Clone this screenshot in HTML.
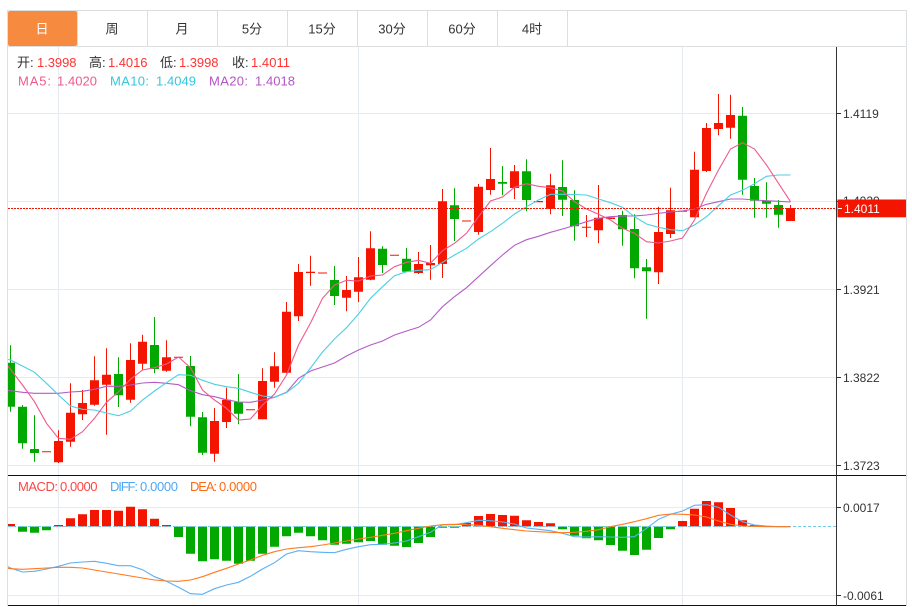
<!DOCTYPE html>
<html><head><meta charset="utf-8"><style>
html,body{margin:0;padding:0;background:#fff;width:912px;height:607px;overflow:hidden}
svg{display:block;font-family:"Liberation Sans","Noto Sans CJK SC",sans-serif}
text{white-space:pre}
</style></head><body>
<svg width="912" height="607" viewBox="0 0 912 607" xmlns="http://www.w3.org/2000/svg">
<defs><clipPath id="c"><rect x="8" y="47" width="828" height="558"/></clipPath></defs>
<rect width="912" height="607" fill="#fff"/>
<!-- grid -->
<path d="M8 113.5H836M8 201.5H836M8 289.5H836M8 377.5H836M8 465.5H836M8 507.5H836M8 595.5H836M58.5 47V605M358.5 47V605M682.5 47V605" stroke="#e5ebf1" fill="none"/>
<!-- frame -->
<path d="M7.5 10V606M906.5 10V606M7 10.5H907M8 46.5H906" stroke="#dcdfe2" fill="none"/>
<path d="M147.5 11V46M217.5 11V46M287.5 11V46M357.5 11V46M427.5 11V46M497.5 11V46M567.5 11V46M77.5 11V46" stroke="#dcdfe2" fill="none"/>
<rect x="8" y="11" width="69" height="35" rx="2" fill="#f68b3f"/>
<g font-size="13" fill="#333" text-anchor="middle">
<text x="42" y="33.500" fill="#fff">日</text>
<text x="112" y="33.500">周</text>
<text x="182" y="33.500">月</text>
<text x="252" y="33.500">5分</text>
<text x="322" y="33.500">15分</text>
<text x="392" y="33.500">30分</text>
<text x="462" y="33.500">60分</text>
<text x="532" y="33.500">4时</text>
</g>
<g font-size="13" fill="#333">
<text x="17" y="67">开:</text><text x="37" y="67" fill="#f33" textLength="39.500">1.3998</text>
<text x="89" y="67">高:</text><text x="108" y="67" fill="#f33" textLength="39.500">1.4016</text>
<text x="160" y="67">低:</text><text x="179" y="67" fill="#f33" textLength="39.500">1.3998</text>
<text x="232" y="67">收:</text><text x="251" y="67" fill="#f33" textLength="39">1.4011</text>
<text x="18" y="85.500" fill="#ee5a8c" textLength="33">MA5:</text><text x="57" y="85.500" fill="#ee5a8c" textLength="40">1.4020</text>
<text x="110" y="85.500" fill="#35c6dd" textLength="39">MA10:</text><text x="156" y="85.500" fill="#35c6dd" textLength="40">1.4049</text>
<text x="209" y="85.500" fill="#b455c6" textLength="39">MA20:</text><text x="255" y="85.500" fill="#b455c6" textLength="40">1.4018</text>
<text x="18" y="491" fill="#f44" textLength="40">MACD:</text><text x="60" y="491" fill="#f44" textLength="37.500">0.0000</text>
<text x="110" y="491" fill="#4fa8f5" textLength="28">DIFF:</text><text x="140" y="491" fill="#4fa8f5" textLength="38">0.0000</text>
<text x="190" y="491" fill="#ff6a14" textLength="27">DEA:</text><text x="219" y="491" fill="#ff6a14" textLength="38">0.0000</text>
</g>
<g clip-path="url(#c)">
<!-- red wicks -->
<path stroke="#f41500" fill="none" d="M58.500 430.300V463M70.500 383.300V446.700M82.500 390V420M94.500 356.300V405.700M106.500 348.300V434.700M130.500 343.300V402.700M142.500 334.700V369.700M166.500 340.300V371.700M214.500 408V461.700M226.500 387.700V428M262.500 368.300V419.300M274.500 352.300V387.700M286.500 302V373M298.500 264V321M310.500 255.700V285.700M346.500 276V311.300M358.500 257V302M370.500 231.300V280.300M418.500 252V274M430.500 245V279.700M442.500 189V278M478.500 184V234.700M490.500 148V194.700M514.500 165V199M550.500 173.700V214.300M586.500 215V237M598.500 185V243.300M658.500 206.700V284M670.500 187.700V238M694.500 151.700V217.300M706.500 123V172M718.500 94V135.300M730.500 94.700V138.700M790.500 205V221"/>
<!-- green wicks -->
<path stroke="#00a800" fill="none" d="M10.500 345.300V411.700M22.500 405V448.700M34.500 415.300V461.700M118.500 357.300V407M154.500 317V373.300M190.500 356V426.300M202.500 412V455M238.500 374V424.300M334.500 266V305M382.500 246.300V273M406.500 248V272M454.500 188.300V241M502.500 166V195.300M526.500 159.300V211.300M562.500 160.300V216M574.500 190.300V240.700M622.500 210.700V245.700M634.500 214.300V278.300M646.500 259V318.700M742.500 107V194.700M754.500 178V217.700M766.500 182.300V217.700M778.500 200V227.700"/>
<!-- red bodies -->
<path fill="#f41500" d="M42 451.200h9v1h-9zM54 441h9V462.300h-9zM66 412.700h9V441.700h-9zM78 403h9V414.300h-9zM90 380.300h9V404.700h-9zM102 374.700h9V384.700h-9zM126 360h9V399.700h-9zM138 341.700h9V363.700h-9zM162 357.300h9V370.700h-9zM174 356.800h9v1h-9zM210 421h9V453.700h-9zM222 399.700h9V422h-9zM246 409.200h9v1h-9zM258 381h9V419.300h-9zM270 366.300h9V381.700h-9zM282 311.700h9V372.700h-9zM294 272h9V316.300h-9zM306 271.800h9v1.200h-9zM318 272.500h9v1h-9zM342 290h9V297.700h-9zM354 277.300h9V291.700h-9zM366 248.300h9V279.700h-9zM390 254.800h9v1h-9zM414 264h9V273h-9zM426 263h9V265.300h-9zM438 201.300h9V264h-9zM462 220.500h9v1h-9zM474 186.700h9V232h-9zM486 179h9V190h-9zM510 171.300h9V188h-9zM534 201h9v1.200h-9zM546 185.300h9V208.700h-9zM582 226.800h9v1h-9zM594 217.700h9V230.300h-9zM606 217.500h9v1.500h-9zM654 232h9V272.300h-9zM666 210.300h9V234h-9zM678 210.800h9v1h-9zM690 169.700h9V217.300h-9zM702 128h9V171h-9zM714 123h9V129h-9zM726 115h9V127.700h-9zM786 208h9V221h-9z"/>
<!-- green bodies -->
<path fill="#00a800" d="M6 362.700h9V406.700H6zM18 406.700h9V443.300h-9zM30 449h9V453h-9zM114 374h9V395.300h-9zM150 345h9V369h-9zM186 366h9V416.700h-9zM198 417.300h9V452.700h-9zM234 402h9V413.700h-9zM330 280h9V296h-9zM378 248.700h9V265h-9zM402 258.700h9V271.700h-9zM450 205.300h9V219h-9zM498 182h9V183.700h-9zM522 171.300h9V200h-9zM558 187h9V199.700h-9zM570 200h9V226.300h-9zM618 215h9V229.300h-9zM630 229h9V268.300h-9zM642 267.300h9V271.300h-9zM738 115.700h9V179.700h-9zM750 186h9V200.700h-9zM762 200.700h9V203.700h-9zM774 205h9V214.700h-9z"/>
<!-- MA20 -->
<polyline fill="none" stroke="#b45cc8" stroke-width="1.100" points="8,390.500 10.500,390.700 22.500,392.300 34.500,393.300 46.500,393.300 58.500,393.300 70.500,392 82.500,391.300 94.500,389.300 106.500,386.300 118.500,386.300 130.500,385 142.500,383 154.500,382.300 166.500,383.300 178.500,384.700 190.500,390.700 202.500,394.700 214.500,396.700 226.500,399.700 238.500,402 250.500,402.300 262.500,400 274.500,397.300 286.500,392.300 298.500,378.300 310.500,371 322.500,367 334.500,363 346.500,356 358.500,350 370.500,345 382.500,341 394.500,335 406.500,331 418.500,327.300 430.500,320 442.500,306.700 454.500,296.700 466.500,287.700 478.500,276.700 490.500,265.700 502.500,255 514.500,245.300 526.500,239.700 538.500,236.300 550.500,232.300 562.500,229 574.500,225.500 586.500,221.700 598.500,218.300 610.500,216.700 622.500,216 634.500,216 646.500,215 658.500,213.300 670.500,212 682.500,211 694.500,209 706.500,204.300 718.500,201.700 730.500,199 742.500,199 754.500,200 766.500,200.700 778.500,201.300 790.500,202"/>
<!-- MA10 -->
<polyline fill="none" stroke="#4dcfe3" stroke-width="1.100" points="8,359.500 10.500,360 22.500,366 34.500,372.300 46.500,383.300 58.500,395 70.500,406 82.500,409.300 94.500,410 106.500,413 118.500,415.700 130.500,411 142.500,400 154.500,391 166.500,382.700 178.500,374.700 190.500,375.300 202.500,380.300 214.500,384.300 226.500,386.700 238.500,388.300 250.500,392.300 262.500,396 274.500,397.300 286.500,392.700 298.500,383.300 310.500,368 322.500,352 334.500,339 346.500,327.700 358.500,314 370.500,298.300 382.500,286.700 394.500,275.700 406.500,271.700 418.500,270.300 430.500,269.700 442.500,262.300 454.500,255 466.500,248.300 478.500,239 490.500,231.700 502.500,223.300 514.500,214 526.500,206.700 538.500,200 550.500,194.300 562.500,194.300 574.500,194.500 586.500,195 598.500,199 610.500,202.700 622.500,207.300 634.500,216.700 646.500,224 658.500,227.300 670.500,229.700 682.500,230.700 694.500,225 706.500,216.700 718.500,205.700 730.500,195 742.500,190.300 754.500,183.700 766.500,176.300 778.500,175 790.500,175"/>
<!-- MA5 -->
<polyline fill="none" stroke="#ee5a8c" stroke-width="1.100" points="8,366 10.500,369.300 22.500,385 34.500,401.700 46.500,423.300 58.500,438.300 70.500,439.300 82.500,431.700 94.500,418.300 106.500,402.300 118.500,391.700 130.500,379.300 142.500,370 154.500,367.700 166.500,364 178.500,357 190.500,367.700 202.500,390 214.500,400 226.500,408.300 238.500,420 250.500,419 262.500,405 274.500,394 286.500,375 298.500,345 310.500,323 322.500,298.300 334.500,285 346.500,280.300 358.500,281 370.500,276 382.500,275 394.500,266.700 406.500,262.300 418.500,260.300 430.500,263.300 442.500,250.700 454.500,243.300 466.500,233.300 478.500,216.700 490.500,201 502.500,197 514.500,187.300 526.500,183.700 538.500,186.300 550.500,187.700 562.500,191 574.500,201.700 586.500,209 598.500,214.300 610.500,220 622.500,228.300 634.500,233.300 646.500,241.700 658.500,243 670.500,241 682.500,238 694.500,220 706.500,193.300 718.500,170 730.500,149 742.500,142.700 754.500,149 766.500,165 778.500,183.300 790.500,201.700"/>
<!-- current price line -->
<path d="M8 208.500H836" stroke="#f41500" stroke-dasharray="2 1" fill="none"/>
<!-- MACD histogram -->
<path fill="#f41500" d="M6 524h9v2.500H6zM54 525h9v1.500h-9zM66 518.300h9v8.200h-9zM78 514.300h9v12.200h-9zM90 510h9v16.500h-9zM102 510h9v16.500h-9zM114 510.700h9v15.800h-9zM126 506.700h9v19.800h-9zM138 509.300h9v17.200h-9zM150 518.700h9v7.800h-9zM162 525h9v1.500h-9zM462 523h9v3.500h-9zM474 516h9v10.500h-9zM486 514h9v12.500h-9zM498 515h9v11.500h-9zM510 515.700h9v10.800h-9zM522 520.300h9v6.200h-9zM534 522h9v4.500h-9zM546 523.300h9v3.200h-9zM678 521h9v5.500h-9zM690 508.700h9v17.800h-9zM702 501h9v25.500h-9zM714 502.300h9v24.200h-9zM726 508h9v18.500h-9zM738 520.300h9v6.200h-9zM750 525h9v1.500h-9z"/>
<path fill="#00a800" d="M18 526.500h9V531.700h-9zM30 526.500h9V532.700h-9zM42 526.500h9V530.300h-9zM174 526.500h9V537h-9zM186 526.500h9V553.700h-9zM198 526.500h9V561.300h-9zM210 526.500h9V559.300h-9zM222 526.500h9V560.700h-9zM234 526.500h9V563.700h-9zM246 526.500h9V560.700h-9zM258 526.500h9V553.700h-9zM270 526.500h9V546.700h-9zM282 526.500h9V536.300h-9zM294 526.500h9V532.700h-9zM306 526.500h9V536.300h-9zM318 526.500h9V540.300h-9zM330 526.500h9V544.700h-9zM342 526.500h9V543.700h-9zM354 526.500h9V542.300h-9zM366 526.500h9V541h-9zM378 526.500h9V544.700h-9zM390 526.500h9V545.700h-9zM402 526.500h9V547h-9zM414 526.500h9V543h-9zM426 526.500h9V537h-9zM438 526.500h9V527.700h-9zM450 526.500h9V527.700h-9zM558 526.500h9V529.300h-9zM570 526.500h9V535.700h-9zM582 526.500h9V538.300h-9zM594 526.500h9V540.300h-9zM606 526.500h9V545h-9zM618 526.500h9V550.700h-9zM630 526.500h9V555h-9zM642 526.500h9V549.700h-9zM654 526.500h9V538h-9zM666 526.500h9V529.300h-9z"/>
<path d="M8 526.500H836" stroke="#6fcdec" stroke-dasharray="3 2" fill="none"/>
<!-- DIFF -->
<polyline fill="none" stroke="#5cb0f5" stroke-width="1.100" points="8,566.700 10.500,568 22.500,572 34.500,571.300 46.500,569 58.500,566.300 70.500,563 82.500,562 94.500,561.300 106.500,563.300 118.500,565.700 130.500,565.700 142.500,569.700 154.500,576.700 166.500,581.300 178.500,587.300 190.500,593.700 202.500,594.300 214.500,588.700 226.500,585 238.500,582.300 250.500,576.300 262.500,569 274.500,562.700 286.500,554 298.500,550.700 310.500,551.700 322.500,552.300 334.500,552.700 346.500,549.300 358.500,546.700 370.500,544.700 382.500,544.300 394.500,543 406.500,541 418.500,536.700 430.500,532.300 442.500,524.700 454.500,524.700 466.500,522.700 478.500,520.300 490.500,520.700 502.500,522 514.500,524 526.500,528 538.500,529.300 550.500,530.700 562.500,533.300 574.500,536.700 586.500,537 598.500,536.700 610.500,537 622.500,537.300 634.500,536.700 646.500,528.300 658.500,519.300 670.500,514.300 682.500,511 694.500,505.300 706.500,504.700 718.500,507.300 730.500,515 742.500,521.700 754.500,525 766.500,526 778.500,526.700 790.500,526.700"/>
<!-- DEA -->
<polyline fill="none" stroke="#ff7a1f" stroke-width="1.100" points="8,568.300 10.500,568.700 22.500,569.300 34.500,568.700 46.500,568 58.500,567.300 70.500,567.300 82.500,568 94.500,570 106.500,572 118.500,574 130.500,576 142.500,578 154.500,580 166.500,581 178.500,581.300 190.500,580 202.500,576.700 214.500,572.300 226.500,568.300 238.500,564 250.500,560 262.500,555.300 274.500,551.700 286.500,549 298.500,547.700 310.500,546.700 322.500,545 334.500,543 346.500,541 358.500,539 370.500,537.300 382.500,535.300 394.500,533.300 406.500,530.700 418.500,528.300 430.500,526 442.500,524.700 454.500,524.300 466.500,524.700 478.500,525.300 490.500,526.700 502.500,528.300 514.500,529.700 526.500,531 538.500,531.700 550.500,532.300 562.500,532.700 574.500,532.300 586.500,531.300 598.500,529.700 610.500,526.700 622.500,524.300 634.500,521.700 646.500,518.700 658.500,515.300 670.500,514 682.500,514.300 694.500,515 706.500,517 718.500,521 730.500,524.300 742.500,526 754.500,526.300 766.500,526.700 790.500,526.700"/>
</g>
<!-- axis -->
<path d="M8 475.500H906M8 605.500H906" stroke="#111" fill="none"/>
<path d="M836.500 47V606" stroke="#333" fill="none"/>
<path d="M837 113.500h4M837 201.500h4M837 289.500h4M837 377.500h4M837 465.500h4M837 507.500h4M837 595.500h4" stroke="#333" fill="none"/>
<g font-size="12" fill="#333">
<text x="843" y="118">1.4119</text>
<text x="843" y="205">1.4020</text>
<text x="843" y="294">1.3921</text>
<text x="843" y="382">1.3822</text>
<text x="843" y="470">1.3723</text>
<text x="843" y="512">0.0017</text>
<text x="843" y="600">-0.0061</text>
</g>
<!-- price tag -->
<rect x="837.500" y="199.500" width="68.500" height="17.800" fill="#f41500"/>
<path d="M838 208.500h4" stroke="#fff" fill="none"/>
<text x="844" y="213" font-size="12" fill="#fff">1.4011</text>
</svg>
</body></html>
